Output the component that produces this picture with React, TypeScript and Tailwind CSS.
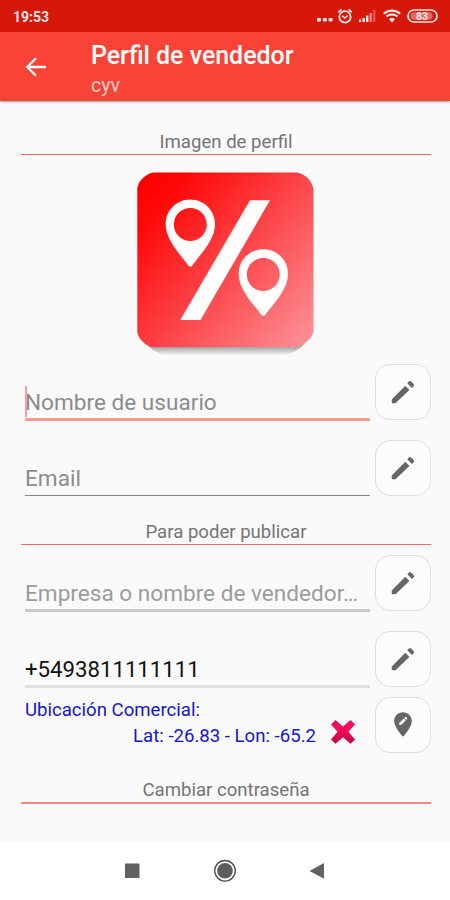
import type { ReactNode } from "react";
import clsx from "clsx";

function StatusBar() {
  return (
    <div className="flex h-8 items-center justify-between bg-[#d61709] pr-3 pl-[13px] text-[#ffe9e6]">
      <span className="mt-px text-[14px] leading-none font-bold">19:53</span>
      <svg width="122" height="18" viewBox="0 0 122 18" fill="none" stroke="currentColor">
        <g fill="currentColor" stroke="none">
          <rect x="1" y="11" width="4" height="3.4" rx="1" />
          <rect x="6.8" y="11" width="4" height="3.4" rx="1" />
          <rect x="12.6" y="11" width="4" height="3.4" rx="1" />
        </g>
        <circle cx="29" cy="9.9" r="5.7" strokeWidth="1.7" />
        <path d="M26.4 8.9l2.4 2.2 3-2.6" strokeWidth="1.5" />
        <path d="M22.2 5.400l3.200-3M35.800 5.400l-3.200-3" strokeWidth="1.9" />
        <g fill="currentColor" stroke="none">
          <rect x="43" y="12.5" width="2.2" height="2.500" />
          <rect x="46.5" y="11" width="2.400" height="4" />
          <rect x="50" y="8.5" width="2.400" height="6.5" />
          <rect x="53.5" y="6" width="2.400" height="9" opacity="0.5" />
          <rect x="57" y="3" width="2.400" height="12" opacity="0.3" />
        </g>
        <path d="M67.8 6.8a12 12 0 0 1 16.4 0" strokeWidth="2.2" />
        <path d="M70.4 9.6a8.2 8.2 0 0 1 11.2 0" strokeWidth="2" />
        <path d="M73 12.3a4.6 4.6 0 0 1 6 0L76 15.4z" fill="currentColor" stroke="none" />
        <rect x="92" y="3" width="29" height="12" rx="6" strokeWidth="1.7" />
        <rect x="94.5" y="5.200" width="22" height="7.6" rx="3.6" fill="currentColor" stroke="none" opacity="0.4" />
        <text x="106" y="12.8" textAnchor="middle" fontSize="10.5" fontWeight="700" fill="currentColor" stroke="none">
          83
        </text>
      </svg>
    </div>
  );
}

function AppBar() {
  return (
    <header className="flex h-[69px] bg-[#f94336] text-white shadow-[0_1px_2px_rgba(0,0,0,0.4)]">
      <button type="button" aria-label="Volver" className="mt-[25px] ml-[25px] h-5 w-[66px]">
        <svg width="22" height="20" viewBox="0 0 22 20" fill="none" stroke="currentColor" strokeWidth="2.3">
          <path d="M21 10H2.5M11 1.200L2.200 10l8.800 8.800" />
        </svg>
      </button>
      <div>
        <h1 className="mt-2 text-[24.950px] leading-[31px] font-medium">Perfil de vendedor</h1>
        <p className="mt-[3px] text-[19.500px] leading-6 text-[#ffcfca]">cyv</p>
      </div>
    </header>
  );
}

function SectionTitle({ children, className }: { children: ReactNode; className?: string }) {
  return (
    <h2
      className={clsx(
        "mr-[19px] ml-[21px] border-b pt-px text-center text-[18.600px] leading-6 text-[#747474]",
        className,
      )}
    >
      {children}
    </h2>
  );
}

function Logo() {
  return (
    <svg className="mx-auto mt-[15px] block" width="182" height="186" viewBox="9 10 182 186">
      <defs>
        <linearGradient id="logo-bg" x1="0" y1="0.1" x2="1" y2="0.95">
          <stop offset="0" stopColor="#ff0000" />
          <stop offset="0.12" stopColor="#ff0808" />
          <stop offset="0.55" stopColor="#fc4a4e" />
          <stop offset="1" stopColor="#fc9096" />
        </linearGradient>
        <linearGradient id="logo-shadow" gradientUnits="userSpaceOnUse" x1="0" y1="186" x2="0" y2="195">
          <stop offset="0.1" stopColor="#a4a6a6" />
          <stop offset="1" stopColor="#f2f4f4" />
        </linearGradient>
      </defs>
      <path d="M14 174L19 182Q30 194.500 41 194.500H161Q172 193 181 182L186 174z" fill="url(#logo-shadow)" />
      <path
        d="M28 12.500H172Q178 13.500 182.500 18Q187.500 23 188.500 29V172Q187.500 177 182 181.500Q177 186 172 187.300H28Q22 186 17.500 181.500Q13 177 12.300 172V28Q13.500 22 18 18Q22.500 13.500 28 12.500z"
        fill="url(#logo-bg)"
      />
      <path d="M125 40.300H145L75.500 160H55.300z" fill="#fffdfc" />
      <path
        fillRule="evenodd"
        fill="#fffdfc"
        d="M65.300 39.500C51.500 39.500 40.700 50.500 40.700 64C40.700 80 55 94 63.300 105.500Q65.300 108.200 67.300 105.500C75.500 94 90 80 90 64C90 50.500 79 39.500 65.300 39.500zM65.300 48a16.500 16.500 0 1 1 0 33a16.500 16.500 0 1 1 0-33z"
      />
      <path
        fillRule="evenodd"
        fill="#fffdfc"
        d="M138.300 89.200C124.500 89.200 113.700 100.200 113.700 113.700C113.700 129.700 128 143.700 136.300 154.700Q138.300 157.400 140.300 154.700C148.500 143.700 163 129.700 163 113.700C163 100.200 152 89.200 138.300 89.200zM138.300 98a16.500 16.500 0 1 1 0 33a16.500 16.500 0 1 1 0-33z"
      />
    </svg>
  );
}

function PencilIcon() {
  return (
    <svg width="30" height="30" viewBox="0 0 24 24" fill="#666">
      <path d="M3 18V20.200q0 .8.800.800H6L17.100 10.300l-3.300-3.300zM20.500 7.400a1.300 1.300 0 0 0 0-1.800l-2-2a1.300 1.300 0 0 0-1.800 0l-1.300 1.300 3.800 3.800z" />
    </svg>
  );
}

function PinIcon() {
  return (
    <svg width="30" height="30" viewBox="0 0 24 24" fill="#666">
      <path d="M12 1.800C8 1.800 4.900 5 4.900 8.800c0 5.200 7.100 12.600 7.100 12.600s7.100-7.400 7.100-12.600c0-3.800-3.100-7-7.100-7zm-1.500 10.100H9v-1.500l3.800-3.800 1.500 1.500zM15.300 7.100l-.6.6-1.500-1.500.6-.6a.4.4 0 0 1 .55 0l.95.95a.4.4 0 0 1 0 .55z" />
    </svg>
  );
}

function IconButton({ label, children }: { label: string; children: ReactNode }) {
  return (
    <button
      type="button"
      aria-label={label}
      className="flex h-14 w-14 shrink-0 items-center justify-center rounded-[15px] border-[1.5px] border-[#dedede] bg-[#fcfcfc]"
    >
      {children}
    </button>
  );
}

type FieldProps = {
  text: string;
  className?: string;
  textClass: string;
  lineClass: string;
  focused?: boolean;
};

function Field({ text, className, textClass, lineClass, focused }: FieldProps) {
  return (
    <div className={clsx("flex h-14 pr-[19px] pl-[25px]", className)}>
      <div className="mr-[5px] flex w-[345px] flex-col">
        <div className="relative mt-[23px] h-[31px] shrink-0">
          {focused && <span className="absolute -top-px left-0 h-[31px] w-[2px] bg-[#f5a19b]" />}
          <span className={clsx("block truncate leading-[31px]", textClass)}>{text}</span>
        </div>
        <div className={clsx("shrink-0", lineClass)} />
      </div>
      <IconButton label="Editar">
        <PencilIcon />
      </IconButton>
    </div>
  );
}

function NavBar() {
  return (
    <nav className="mt-auto flex h-[58px] items-start bg-white">
      <svg className="mx-auto mt-4" width="216" height="26" viewBox="0 0 216 26">
        <rect x="8" y="5.500" width="14.500" height="14.500" fill="#616161" />
        <circle cx="108" cy="12.800" r="10.300" fill="none" stroke="#4e4e4e" strokeWidth="1.300" />
        <circle cx="108" cy="12.800" r="7.800" fill="#5e5e5e" />
        <path d="M207 5V20.700L192.500 12.900z" fill="#616161" />
      </svg>
    </nav>
  );
}

export default function App() {
  return (
    <div className="flex h-[900px] w-[450px] flex-col overflow-hidden bg-[#fafafa] font-['Roboto',sans-serif]">
      <StatusBar />
      <AppBar />

      <main>
        <SectionTitle className="mt-7 border-[#f0626a]">Imagen de perfil</SectionTitle>
        <Logo />

        <Field
          className="mt-2"
          text="Nombre de usuario"
          textClass="text-[22.600px] text-[#8c8c8c]"
          lineClass="h-[3px] bg-[#f69c96]"
          focused
        />
        <Field
          className="mt-5"
          text="Email"
          textClass="text-[22.600px] text-[#8c8c8c]"
          lineClass="mt-px h-px bg-[#868686]"
        />

        <SectionTitle className="mt-[23px] border-[#f4666a]">Para poder publicar</SectionTitle>
        <Field
          className="mt-[10px]"
          text="Empresa o nombre de vendedor…"
          textClass="text-[22.600px] text-[#9c9c9c]"
          lineClass="h-[3px] bg-[#c9c9c9]"
        />
        <Field
          className="mt-5"
          text="+5493811111111"
          textClass="text-[22.200px] text-[#111]"
          lineClass="h-[3px] bg-[#e0e0e0]"
        />

        <div className="mt-[10px] flex h-14 pr-[19px] pl-[25px]">
          <div className="w-[292px] pr-px text-[18.600px] leading-[26px] text-[#1414dc]">
            <p>Ubicación Comercial:</p>
            <p className="text-right">Lat: -26.83 - Lon: -65.2</p>
          </div>
          <button type="button" aria-label="Quitar" className="mt-[22px] mr-[19px] ml-[13px] h-[26px] w-[26px]">
            <svg width="26" height="26" viewBox="0 0 26 26">
              <defs>
                <linearGradient id="cross" x1="0" y1="0" x2="0" y2="1">
                  <stop offset="0.4" stopColor="#f80a5c" />
                  <stop offset="0.9" stopColor="#cb0542" />
                </linearGradient>
              </defs>
              <path
                d="M5.500 1L13 7.600 20.500 1 25 5.500 18.400 12.800 25 20.500 20.500 24.800 13 18.200 5.500 24.800 1 20.500 7.600 12.800 1 5.500z"
                fill="url(#cross)"
              />
            </svg>
          </button>
          <IconButton label="Editar ubicación">
            <PinIcon />
          </IconButton>
        </div>

        <SectionTitle className="mt-6 border-b-2 border-[#f98580]">Cambiar contraseña</SectionTitle>
      </main>

      <NavBar />
    </div>
  );
}
